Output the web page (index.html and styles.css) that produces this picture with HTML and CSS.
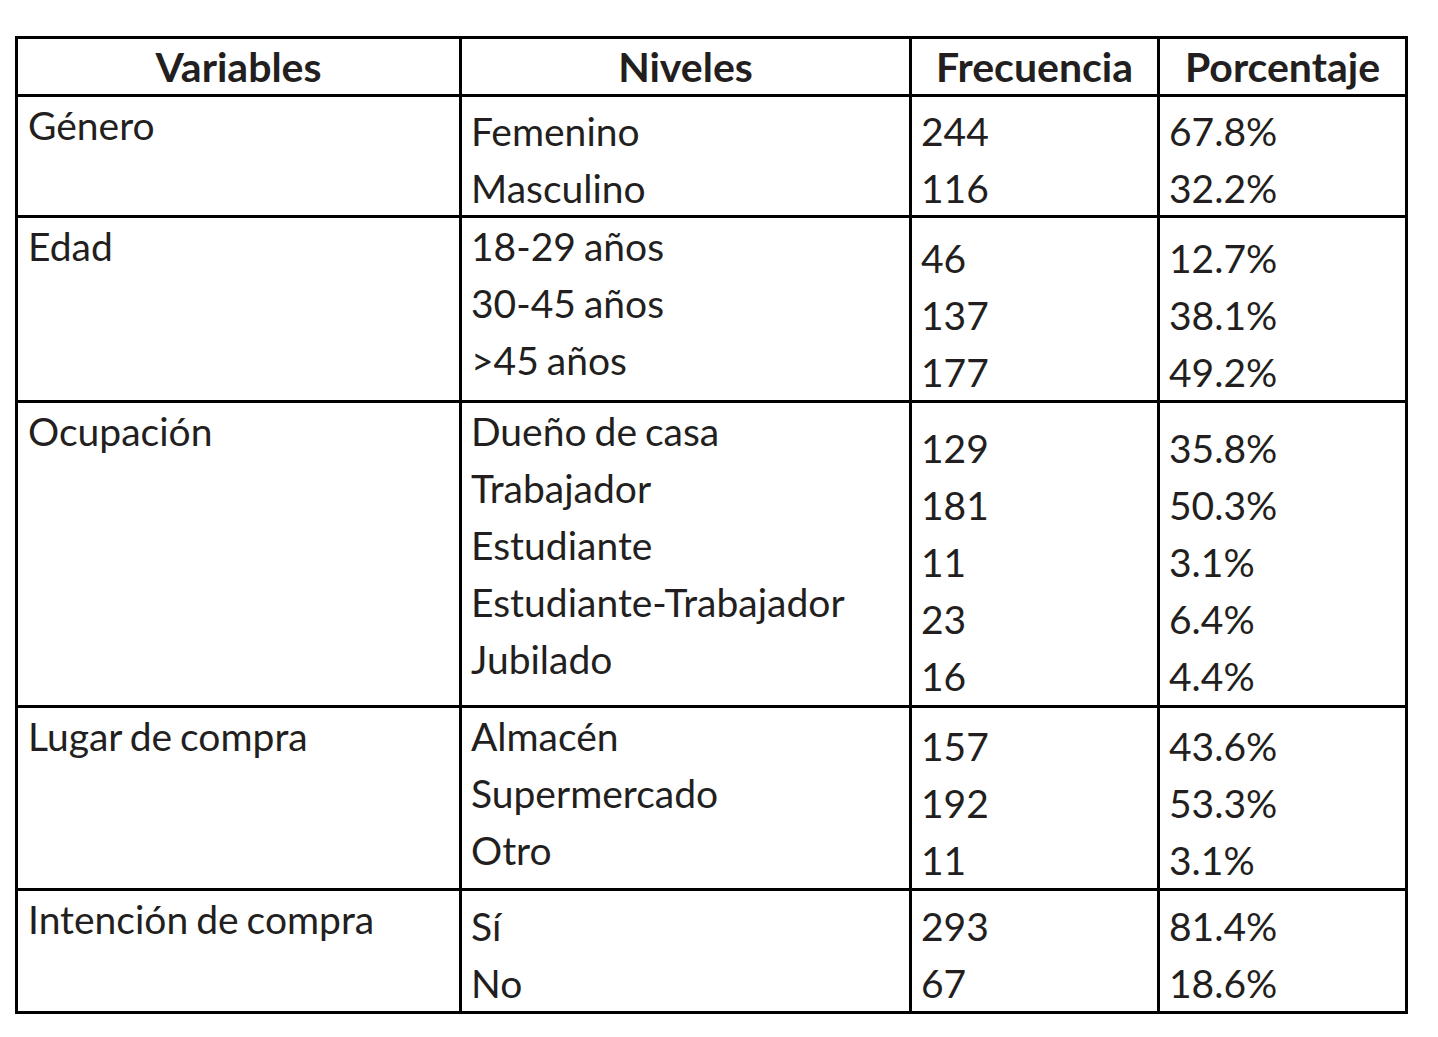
FILE: index.html
```html
<!DOCTYPE html>
<html lang="es">
<head>
<meta charset="utf-8">
<title>Tabla</title>
<link rel="stylesheet" href="styles.css">
</head>
<body>
<div class="table">
  <div class="cell head">Variables</div>
  <div class="cell head">Niveles</div>
  <div class="cell head">Frecuencia</div>
  <div class="cell head">Porcentaje</div>

  <div class="cell var">Género</div>
  <div class="cell p6"><div>Femenino</div><div>Masculino</div></div>
  <div class="cell p6"><div>244</div><div>116</div></div>
  <div class="cell p6"><div>67.8%</div><div>32.2%</div></div>

  <div class="cell var">Edad</div>
  <div class="cell p0"><div>18-29 años</div><div>30-45 años</div><div>&gt;45 años</div></div>
  <div class="cell p12"><div>46</div><div>137</div><div>177</div></div>
  <div class="cell p12"><div>12.7%</div><div>38.1%</div><div>49.2%</div></div>

  <div class="cell var">Ocupación</div>
  <div class="cell p0"><div>Dueño de casa</div><div>Trabajador</div><div>Estudiante</div><div>Estudiante-Trabajador</div><div>Jubilado</div></div>
  <div class="cell p17"><div>129</div><div>181</div><div>11</div><div>23</div><div>16</div></div>
  <div class="cell p17"><div>35.8%</div><div>50.3%</div><div>3.1%</div><div>6.4%</div><div>4.4%</div></div>

  <div class="cell var">Lugar de compra</div>
  <div class="cell p0"><div>Almacén</div><div>Supermercado</div><div>Otro</div></div>
  <div class="cell p10"><div>157</div><div>192</div><div>11</div></div>
  <div class="cell p10"><div>43.6%</div><div>53.3%</div><div>3.1%</div></div>

  <div class="cell var">Intención de compra</div>
  <div class="cell p7"><div>Sí</div><div>No</div></div>
  <div class="cell p7"><div>293</div><div>67</div></div>
  <div class="cell p7"><div>81.4%</div><div>18.6%</div></div>
</div>
</body>
</html>
```

FILE: styles.css
```css
html, body {
  margin: 0;
  padding: 0;
  background: #ffffff;
}

body {
  font-family: Lato, "Open Sans", sans-serif;
  color: #231f20;
}

.table {
  display: grid;
  grid-template-columns: 441px 447px 245px 245px;
  grid-template-rows: 55px 118px 182px 302px 180px 120px;
  gap: 3px;
  padding: 3px;
  background: #000000;
  width: max-content;
  margin: 36px 0 0 15px;
}

.cell {
  background: #ffffff;
  font-size: 39px;
  line-height: 57px;
  padding-left: 9px;
  white-space: nowrap;
  overflow: hidden;
  word-spacing: -2px;
}

.head {
  font-size: 41px;
  font-weight: 700;
  text-align: center;
  line-height: 55px;
  padding-left: 0;
  padding-right: 0;
  word-spacing: 0;
}

.var { padding-top: 0; padding-left: 10px; }
.p0 { padding-top: 0; }
.p6 { padding-top: 6px; }
.p7 { padding-top: 7px; }
.p10 { padding-top: 10px; }
.p12 { padding-top: 12px; }
.p17 { padding-top: 17px; }
```
